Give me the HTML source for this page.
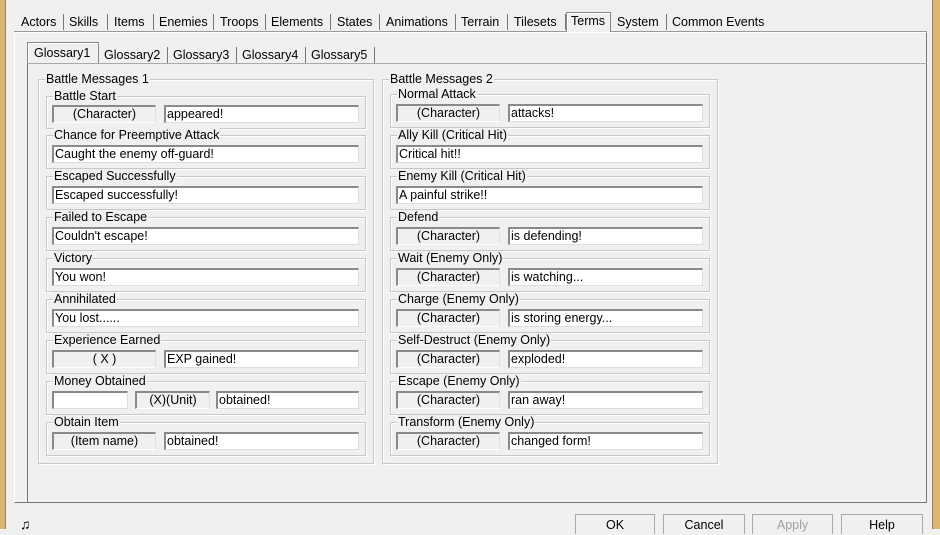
<!DOCTYPE html>
<html><head><meta charset="utf-8"><style>
*{margin:0;padding:0;box-sizing:border-box}
body{width:940px;height:529px;overflow:hidden;background:#f0f0f0;font-family:"Liberation Sans","DejaVu Sans",sans-serif;font-size:12.5px;color:#000;position:relative}
.a{position:absolute}
.tab{position:absolute;top:13px;height:18px;line-height:18px;white-space:nowrap}
.sep{position:absolute;width:1px;background:#777}
.box{position:absolute;border:1px solid #c8c8c8;box-shadow:inset 1px 1px 0 #fff,1px 1px 0 #fff}
.lg{position:absolute;top:-8px;left:6px;background:#f0f0f0;padding:0 1px;line-height:14px;white-space:nowrap}
.g{position:absolute;height:18px;background:#f0f0f0;border-top:2px solid #8a8a8a;border-left:2px solid #8a8a8a;border-right:1px solid #e0e0e0;border-bottom:1px solid #fff;text-align:center;line-height:15px}
.w{position:absolute;height:18px;background:#fff;border-top:2px solid #8a8a8a;border-left:2px solid #8a8a8a;border-right:1px solid #ddd;border-bottom:1px solid #ddd;line-height:15px;padding-left:1px;white-space:nowrap}
.btn{position:absolute;top:514px;height:20px;border:1px solid #aaa;border-bottom:none;text-align:center;line-height:20px;background:#f0f0f0}
</style></head><body>
<div class="a" style="left:0;top:0;width:6px;height:529px;background:#d8b778;border-right:1px solid #a08050"></div>
<div class="a" style="left:932px;top:0;width:8px;height:529px;background:#d8b778;border-left:1px solid #a08050"></div>
<!-- top tabs -->
<div class="tab" style="left:21px">Actors</div><div class="sep" style="left:63px;top:14px;height:16px"></div>
<div class="tab" style="left:69px">Skills</div><div class="sep" style="left:107px;top:14px;height:16px"></div>
<div class="tab" style="left:114px">Items</div><div class="sep" style="left:153px;top:14px;height:16px"></div>
<div class="tab" style="left:159px">Enemies</div><div class="sep" style="left:213px;top:14px;height:16px"></div>
<div class="tab" style="left:220px">Troops</div><div class="sep" style="left:265px;top:14px;height:16px"></div>
<div class="tab" style="left:271px">Elements</div><div class="sep" style="left:330px;top:14px;height:16px"></div>
<div class="tab" style="left:337px">States</div><div class="sep" style="left:379px;top:14px;height:16px"></div>
<div class="tab" style="left:386px">Animations</div><div class="sep" style="left:455px;top:14px;height:16px"></div>
<div class="tab" style="left:461px">Terrain</div><div class="sep" style="left:507px;top:14px;height:16px"></div>
<div class="tab" style="left:514px">Tilesets</div><div class="sep" style="left:565px;top:14px;height:16px"></div>
<div class="a" style="left:566px;top:12px;width:45px;height:20px;border:1px solid #888;border-bottom:none;box-shadow:inset 1px 1px 0 #fff;background:#f0f0f0"></div>
<div class="tab" style="left:571px;top:12px">Terms</div>
<div class="tab" style="left:617px">System</div><div class="sep" style="left:666px;top:14px;height:16px"></div>
<div class="tab" style="left:672px">Common Events</div>
<!-- main panel -->
<div class="a" style="left:14px;top:32px;width:913px;height:471px;border-top:1px solid #fff;border-left:1px solid #fff;border-right:1px solid #777;border-bottom:1px solid #777"></div>
<div class="a" style="left:14px;top:31px;width:552px;height:1px;background:#999"></div>
<div class="a" style="left:611px;top:31px;width:316px;height:1px;background:#999"></div>
<!-- inner tabs -->
<div class="a" style="left:27px;top:42px;width:72px;height:22px;border:1px solid #888;border-bottom:none;box-shadow:inset 1px 1px 0 #fff;background:#f0f0f0"></div>
<div class="tab" style="left:34px;top:44px">Glossary1</div>
<div class="tab" style="left:104px;top:46px">Glossary2</div><div class="sep" style="left:167px;top:47px;height:16px"></div>
<div class="tab" style="left:173px;top:46px">Glossary3</div><div class="sep" style="left:236px;top:47px;height:16px"></div>
<div class="tab" style="left:242px;top:46px">Glossary4</div><div class="sep" style="left:305px;top:47px;height:16px"></div>
<div class="tab" style="left:311px;top:46px">Glossary5</div><div class="sep" style="left:374px;top:47px;height:16px"></div>
<div class="a" style="left:27px;top:63px;width:900px;height:440px;border-left:1px solid #777;border-top:1px solid #aaa"></div>

<!-- Group 1 -->
<div class="box" style="left:38px;top:79px;width:336px;height:385px"><span class="lg">Battle Messages 1</span></div>
<div class="box" style="left:46px;top:96px;width:320px;height:33px"><span class="lg">Battle Start</span></div>
<div class="g" style="left:52px;top:105px;width:104px">(Character)</div><div class="w" style="left:164px;top:105px;width:195px">appeared!</div>
<div class="box" style="left:46px;top:135px;width:320px;height:34px"><span class="lg">Chance for Preemptive Attack</span></div>
<div class="w" style="left:52px;top:145px;width:307px">Caught the enemy off-guard!</div>
<div class="box" style="left:46px;top:176px;width:320px;height:34px"><span class="lg">Escaped Successfully</span></div>
<div class="w" style="left:52px;top:186px;width:307px">Escaped successfully!</div>
<div class="box" style="left:46px;top:217px;width:320px;height:34px"><span class="lg">Failed to Escape</span></div>
<div class="w" style="left:52px;top:227px;width:307px">Couldn't escape!</div>
<div class="box" style="left:46px;top:258px;width:320px;height:34px"><span class="lg">Victory</span></div>
<div class="w" style="left:52px;top:268px;width:307px">You won!</div>
<div class="box" style="left:46px;top:299px;width:320px;height:34px"><span class="lg">Annihilated</span></div>
<div class="w" style="left:52px;top:309px;width:307px">You lost......</div>
<div class="box" style="left:46px;top:340px;width:320px;height:34px"><span class="lg">Experience Earned</span></div>
<div class="g" style="left:52px;top:350px;width:104px">( X )</div><div class="w" style="left:164px;top:350px;width:195px">EXP gained!</div>
<div class="box" style="left:46px;top:381px;width:320px;height:34px"><span class="lg">Money Obtained</span></div>
<div class="w" style="left:52px;top:391px;width:76px"></div><div class="g" style="left:135px;top:391px;width:75px">(X)(Unit)</div><div class="w" style="left:216px;top:391px;width:143px">obtained!</div>
<div class="box" style="left:46px;top:422px;width:320px;height:34px"><span class="lg">Obtain Item</span></div>
<div class="g" style="left:52px;top:432px;width:104px">(Item name)</div><div class="w" style="left:164px;top:432px;width:195px">obtained!</div>

<!-- Group 2 -->
<div class="box" style="left:382px;top:79px;width:336px;height:385px"><span class="lg">Battle Messages 2</span></div>
<div class="box" style="left:390px;top:94px;width:320px;height:34px"><span class="lg">Normal Attack</span></div>
<div class="g" style="left:396px;top:104px;width:104px">(Character)</div><div class="w" style="left:508px;top:104px;width:195px">attacks!</div>
<div class="box" style="left:390px;top:135px;width:320px;height:34px"><span class="lg">Ally Kill (Critical Hit)</span></div>
<div class="w" style="left:396px;top:145px;width:307px">Critical hit!!</div>
<div class="box" style="left:390px;top:176px;width:320px;height:34px"><span class="lg">Enemy Kill (Critical Hit)</span></div>
<div class="w" style="left:396px;top:186px;width:307px">A painful strike!!</div>
<div class="box" style="left:390px;top:217px;width:320px;height:34px"><span class="lg">Defend</span></div>
<div class="g" style="left:396px;top:227px;width:104px">(Character)</div><div class="w" style="left:508px;top:227px;width:195px">is defending!</div>
<div class="box" style="left:390px;top:258px;width:320px;height:34px"><span class="lg">Wait (Enemy Only)</span></div>
<div class="g" style="left:396px;top:268px;width:104px">(Character)</div><div class="w" style="left:508px;top:268px;width:195px">is watching...</div>
<div class="box" style="left:390px;top:299px;width:320px;height:34px"><span class="lg">Charge (Enemy Only)</span></div>
<div class="g" style="left:396px;top:309px;width:104px">(Character)</div><div class="w" style="left:508px;top:309px;width:195px">is storing energy...</div>
<div class="box" style="left:390px;top:340px;width:320px;height:34px"><span class="lg">Self-Destruct (Enemy Only)</span></div>
<div class="g" style="left:396px;top:350px;width:104px">(Character)</div><div class="w" style="left:508px;top:350px;width:195px">exploded!</div>
<div class="box" style="left:390px;top:381px;width:320px;height:34px"><span class="lg">Escape (Enemy Only)</span></div>
<div class="g" style="left:396px;top:391px;width:104px">(Character)</div><div class="w" style="left:508px;top:391px;width:195px">ran away!</div>
<div class="box" style="left:390px;top:422px;width:320px;height:34px"><span class="lg">Transform (Enemy Only)</span></div>
<div class="g" style="left:396px;top:432px;width:104px">(Character)</div><div class="w" style="left:508px;top:432px;width:195px">changed form!</div>

<!-- bottom -->
<div class="a" style="left:20px;top:516px;font-size:14px">♫</div>
<div class="btn" style="left:575px;width:80px">OK</div>
<div class="btn" style="left:663px;width:82px">Cancel</div>
<div class="btn" style="left:752px;width:81px;color:#a0a0a0">Apply</div>
<div class="btn" style="left:841px;width:82px">Help</div>
</body></html>
